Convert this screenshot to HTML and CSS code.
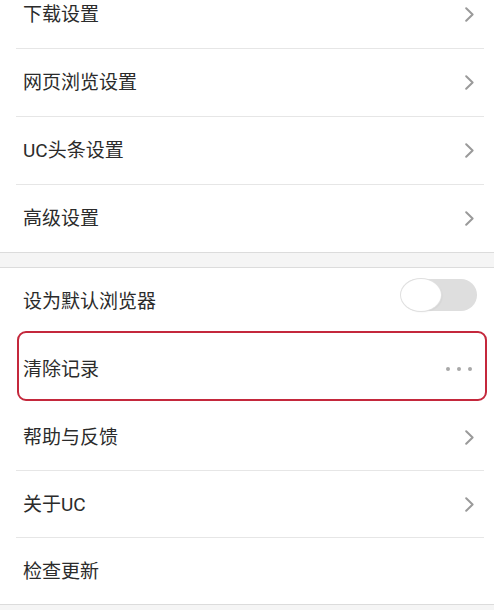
FILE: index.html
```html
<!DOCTYPE html>
<html lang="zh-CN">
<head>
<meta charset="utf-8">
<link rel="stylesheet" href="styles.css">
</head>
<body>
<div class="group group-top">
  <div class="row"><span class="label">下载设置</span><svg class="chev" viewBox="0 0 9 15" width="9" height="15"><path d="M1.2 1.2 L7.6 7.5 L1.2 13.8"/></svg></div>
  <div class="row"><span class="label">网页浏览设置</span><svg class="chev" viewBox="0 0 9 15" width="9" height="15"><path d="M1.2 1.2 L7.6 7.5 L1.2 13.8"/></svg></div>
  <div class="row"><span class="label">UC头条设置</span><svg class="chev" viewBox="0 0 9 15" width="9" height="15"><path d="M1.2 1.2 L7.6 7.5 L1.2 13.8"/></svg></div>
  <div class="row last"><span class="label">高级设置</span><svg class="chev" viewBox="0 0 9 15" width="9" height="15"><path d="M1.2 1.2 L7.6 7.5 L1.2 13.8"/></svg></div>
</div>
<div class="gap"></div>
<div class="group group-bottom">
  <div class="row plain toggle-row"><span class="label">设为默认浏览器</span><span class="toggle"><span class="knob"></span></span></div>
  <div class="row plain highlighted"><span class="label">清除记录</span><span class="dots"><i></i><i></i><i></i></span><span class="mark"></span></div>
  <div class="row"><span class="label">帮助与反馈</span><svg class="chev" viewBox="0 0 9 15" width="9" height="15"><path d="M1.2 1.2 L7.6 7.5 L1.2 13.8"/></svg></div>
  <div class="row"><span class="label">关于UC</span><svg class="chev" viewBox="0 0 9 15" width="9" height="15"><path d="M1.2 1.2 L7.6 7.5 L1.2 13.8"/></svg></div>
  <div class="row last"><span class="label">检查更新</span></div>
</div>
<div class="tail"></div>
</body>
</html>
```

FILE: styles.css
```css
html, body {
  margin: 0;
  padding: 0;
}
body {
  background: #f5f5f5;
  font-family: Roboto, "Noto Sans CJK SC", "Noto Sans", sans-serif;
  color: #2b2b2b;
  overflow: hidden;
}
.group {
  background: #fff;
  border-top: 1px solid #dcdcdc;
  border-bottom: 1px solid #dcdcdc;
}
.group-top {
  margin-top: -19px;
  border-top: none;
}
.row {
  display: flex;
  align-items: center;
  justify-content: space-between;
  height: 67px;
  margin: 0 10px 0 16px;
  padding: 0 10px 0 7px;
  border-bottom: 1px solid #e6e6e6;
  position: relative;
}
.group-bottom .row {
  height: 66px;
}
.row.last {
  border-bottom: none;
}
.row.plain {
  border-bottom-color: transparent;
}
.group-bottom .highlighted {
  height: 68px;
}
.label {
  font-size: 19px;
  line-height: 1;
}
.chev {
  display: block;
}
.chev path {
  fill: none;
  stroke: #9a9a9a;
  stroke-width: 2;
  stroke-linecap: round;
  stroke-linejoin: round;
}
.gap {
  height: 14px;
}
.toggle {
  width: 76px;
  height: 32px;
  border-radius: 16px;
  background: #dedede;
  margin-right: -3px;
  margin-bottom: 12px;
  position: relative;
  display: block;
}
.knob {
  position: absolute;
  left: 0;
  top: 0;
  width: 40px;
  height: 32px;
  border-radius: 50%;
  background: #fff;
  box-shadow: 0 0 0 1px #e0e0e0, 1px 1px 2px rgba(0, 0, 0, 0.08);
}
.dots {
  display: flex;
  gap: 7px;
  margin-right: 2px;
}
.dots i {
  display: block;
  width: 4px;
  height: 4px;
  border-radius: 50%;
  background: #a8a8a8;
}
.mark {
  position: absolute;
  left: 1px;
  right: -3px;
  top: -4px;
  bottom: 2px;
  border: 2px solid #c4283c;
  border-radius: 9px;
}
.tail {
  height: 10px;
}
```
